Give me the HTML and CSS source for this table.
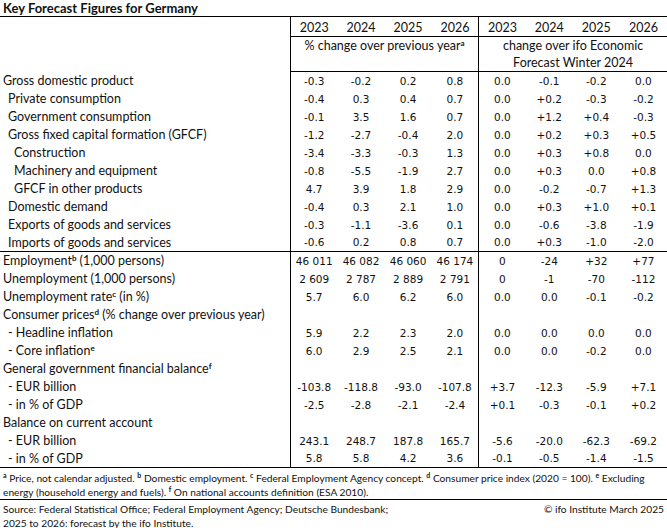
FILE: index.html
```html
<!DOCTYPE html>
<html lang="en">
<head>
    <meta charset="UTF-8">
    <meta name="viewport" content="width=device-width, initial-scale=1.0">
    <title>Key Forecast Figures for Germany</title>
    <link rel="stylesheet" href="styles.css">
</head>
<body>
    <h1 class="title">Key Forecast Figures for Germany</h1>

    <table class="forecast">
        <colgroup>
            <col class="c-label">
            <col><col><col><col class="c-split">
            <col><col><col><col>
        </colgroup>
        <thead>
            <tr class="years">
                <th class="label" rowspan="2"></th>
                <th>2023</th><th>2024</th><th>2025</th><th>2026</th>
                <th>2023</th><th>2024</th><th>2025</th><th>2026</th>
            </tr>
            <tr class="units">
                <th colspan="4">% change over previous year<sup>a</sup></th>
                <th colspan="4">change over ifo Economic<br>Forecast Winter 2024</th>
            </tr>
        </thead>
        <!-- national accounts -->
        <tbody class="group">
            <tr><td class="label">Gross domestic product</td><td>-0.3</td><td>-0.2</td><td>0.2</td><td>0.8</td><td>0.0</td><td>-0.1</td><td>-0.2</td><td>0.0</td></tr>
            <tr><td class="label in1">Private consumption</td><td>-0.4</td><td>0.3</td><td>0.4</td><td>0.7</td><td>0.0</td><td>+0.2</td><td>-0.3</td><td>-0.2</td></tr>
            <tr><td class="label in1">Government consumption</td><td>-0.1</td><td>3.5</td><td>1.6</td><td>0.7</td><td>0.0</td><td>+1.2</td><td>+0.4</td><td>-0.3</td></tr>
            <tr><td class="label in1">Gross fixed capital formation (GFCF)</td><td>-1.2</td><td>-2.7</td><td>-0.4</td><td>2.0</td><td>0.0</td><td>+0.2</td><td>+0.3</td><td>+0.5</td></tr>
            <tr><td class="label in2">Construction</td><td>-3.4</td><td>-3.3</td><td>-0.3</td><td>1.3</td><td>0.0</td><td>+0.3</td><td>+0.8</td><td>0.0</td></tr>
            <tr><td class="label in2">Machinery and equipment</td><td>-0.8</td><td>-5.5</td><td>-1.9</td><td>2.7</td><td>0.0</td><td>+0.3</td><td>0.0</td><td>+0.8</td></tr>
            <tr><td class="label in2">GFCF in other products</td><td>4.7</td><td>3.9</td><td>1.8</td><td>2.9</td><td>0.0</td><td>-0.2</td><td>-0.7</td><td>+1.3</td></tr>
            <tr><td class="label in1">Domestic demand</td><td>-0.4</td><td>0.3</td><td>2.1</td><td>1.0</td><td>0.0</td><td>+0.3</td><td>+1.0</td><td>+0.1</td></tr>
            <tr><td class="label in1">Exports of goods and services</td><td>-0.3</td><td>-1.1</td><td>-3.6</td><td>0.1</td><td>0.0</td><td>-0.6</td><td>-3.8</td><td>-1.9</td></tr>
            <tr><td class="label in1">Imports of goods and services</td><td>-0.6</td><td>0.2</td><td>0.8</td><td>0.7</td><td>0.0</td><td>+0.3</td><td>-1.0</td><td>-2.0</td></tr>
        </tbody>
        <!-- labour market, prices, public finances -->
        <tbody class="group">
            <tr><td class="label">Employment<sup>b</sup> (1,000 persons)</td><td>46 011</td><td>46 082</td><td>46 060</td><td>46 174</td><td>0</td><td>-24</td><td>+32</td><td>+77</td></tr>
            <tr><td class="label">Unemployment (1,000 persons)</td><td>2 609</td><td>2 787</td><td>2 889</td><td>2 791</td><td>0</td><td>-1</td><td>-70</td><td>-112</td></tr>
            <tr><td class="label">Unemployment rate<sup>c</sup> (in %)</td><td>5.7</td><td>6.0</td><td>6.2</td><td>6.0</td><td>0.0</td><td>0.0</td><td>-0.1</td><td>-0.2</td></tr>
            <tr><td class="label">Consumer prices<sup>d</sup> (% change over previous year)</td><td></td><td></td><td></td><td></td><td></td><td></td><td></td><td></td></tr>
            <tr><td class="label in1">- Headline inflation</td><td>5.9</td><td>2.2</td><td>2.3</td><td>2.0</td><td>0.0</td><td>0.0</td><td>0.0</td><td>0.0</td></tr>
            <tr><td class="label in1">- Core inflation<sup>e</sup></td><td>6.0</td><td>2.9</td><td>2.5</td><td>2.1</td><td>0.0</td><td>0.0</td><td>-0.2</td><td>0.0</td></tr>
            <tr><td class="label">General government financial balance<sup>f</sup></td><td></td><td></td><td></td><td></td><td></td><td></td><td></td><td></td></tr>
            <tr><td class="label in1">- EUR billion</td><td>-103.8</td><td>-118.8</td><td>-93.0</td><td>-107.8</td><td>+3.7</td><td>-12.3</td><td>-5.9</td><td>+7.1</td></tr>
            <tr><td class="label in1">- in % of GDP</td><td>-2.5</td><td>-2.8</td><td>-2.1</td><td>-2.4</td><td>+0.1</td><td>-0.3</td><td>-0.1</td><td>+0.2</td></tr>
            <tr><td class="label">Balance on current account</td><td></td><td></td><td></td><td></td><td></td><td></td><td></td><td></td></tr>
            <tr><td class="label in1">- EUR billion</td><td>243.1</td><td>248.7</td><td>187.8</td><td>165.7</td><td>-5.6</td><td>-20.0</td><td>-62.3</td><td>-69.2</td></tr>
            <tr><td class="label in1">- in % of GDP</td><td>5.8</td><td>5.8</td><td>4.2</td><td>3.6</td><td>-0.1</td><td>-0.5</td><td>-1.4</td><td>-1.5</td></tr>
        </tbody>
    </table>

    <p class="notes">
        <sup>a</sup> Price, not calendar adjusted. <sup>b</sup> Domestic employment. <sup>c</sup> Federal Employment Agency concept. <sup>d</sup> Consumer price index (2020 = 100). <sup>e</sup> Excluding<br>
        energy (household energy and fuels). <sup>f</sup> On national accounts definition (ESA 2010).
    </p>
    <div class="source">
        <p>Source: Federal Statistical Office; Federal Employment Agency; Deutsche Bundesbank;<br>2025 to 2026: forecast by the ifo Institute.</p>
        <p>© ifo Institute March 2025</p>
    </div>
</body>
</html>
```
FILE: styles.css
```css
*{
    margin: 0;
    padding: 0;
    box-sizing: border-box;
}
body{
    font-family: Lato, "Open Sans", sans-serif;
    color: #111;
    background-color: #fff;
    width: 667px;
}
.title{
    font-size: 13px;
    font-weight: bold;
    line-height: 16px;
    height: 16px;
    padding-left: 3px;
}
.forecast{
    width: 667px;
    table-layout: fixed;
    border-collapse: collapse;
    border-top: 1px solid #000;
}
.forecast col{ width: 47px; }
.forecast col.c-label{
    width: 290px;
    border-right: 1px solid #000;
}
.forecast col.c-split{ border-right: 1px solid #000; }
.forecast th{
    font-weight: normal;
    font-size: 12.5px;
}
.years th{
    height: 18px;
    line-height: 17px;
    padding-top: 2px;
    border-bottom: 1px solid #000;
}
.years th.label{ border-bottom: none; }
.units th{
    height: 35px;
    line-height: 17px;
    vertical-align: top;
    border-bottom: 1px solid #000;
}
.forecast td{
    height: 18px;
    text-align: center;
    font-family: "DejaVu Sans", sans-serif;
    font-size: 10.5px;
    white-space: nowrap;
}
.forecast td.label{
    text-align: left;
    font-family: Lato, "Open Sans", sans-serif;
    font-size: 12.5px;
    padding-left: 3px;
}
.forecast td.in1{ padding-left: 8px; }
.forecast td.in2{ padding-left: 14px; }
.group tr:last-child td{ border-bottom: 1px solid #000; }
sup{
    font-size: 8px;
    font-weight: bold;
    vertical-align: 4px;
    line-height: 0;
}
.notes{
    font-size: 10.2px;
    line-height: 14px;
    padding: 3px 3px 0;
    border-bottom: 1px solid #000;
    white-space: nowrap;
}
.notes sup{ font-size: 7px; }
.source{
    display: flex;
    justify-content: space-between;
    font-size: 10.2px;
    line-height: 13.5px;
    padding: 3px 3px 0;
}
```
